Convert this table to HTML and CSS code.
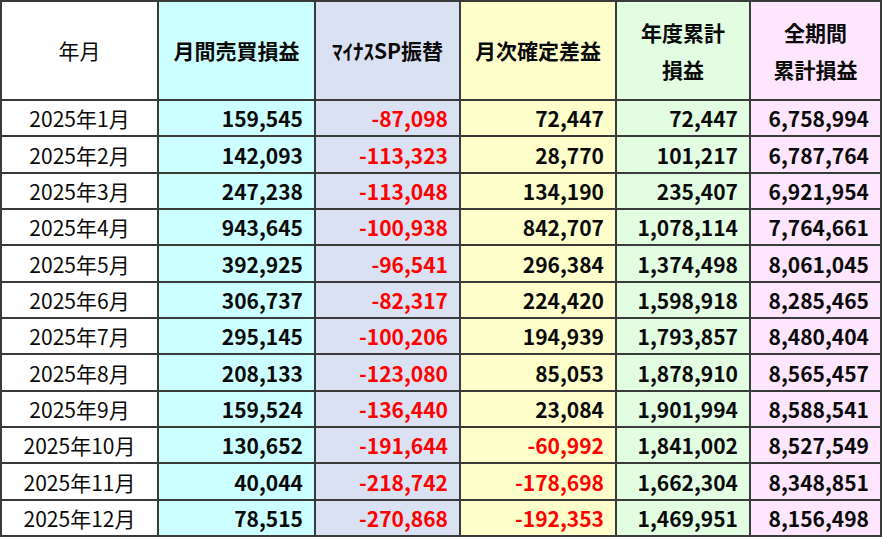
FILE: index.html
```html
<!DOCTYPE html>
<html lang="ja">
<head>
<meta charset="utf-8">
<link rel="stylesheet" href="styles.css">
</head>
<body>
<div class="sheet">
  <div class="cell head c1 normal">年月</div>
  <div class="cell head c2">月間売買損益</div>
  <div class="cell head c3">ﾏｲﾅｽSP振替</div>
  <div class="cell head c4">月次確定差益</div>
  <div class="cell head c5">年度累計<br>損益</div>
  <div class="cell head c6">全期間<br>累計損益</div>

  <div class="cell month c1">2025年1月</div><div class="cell num c2">159,545</div><div class="cell num c3 neg">-87,098</div><div class="cell num c4">72,447</div><div class="cell num c5">72,447</div><div class="cell num c6">6,758,994</div>
  <div class="cell month c1">2025年2月</div><div class="cell num c2">142,093</div><div class="cell num c3 neg">-113,323</div><div class="cell num c4">28,770</div><div class="cell num c5">101,217</div><div class="cell num c6">6,787,764</div>
  <div class="cell month c1">2025年3月</div><div class="cell num c2">247,238</div><div class="cell num c3 neg">-113,048</div><div class="cell num c4">134,190</div><div class="cell num c5">235,407</div><div class="cell num c6">6,921,954</div>
  <div class="cell month c1">2025年4月</div><div class="cell num c2">943,645</div><div class="cell num c3 neg">-100,938</div><div class="cell num c4">842,707</div><div class="cell num c5">1,078,114</div><div class="cell num c6">7,764,661</div>
  <div class="cell month c1">2025年5月</div><div class="cell num c2">392,925</div><div class="cell num c3 neg">-96,541</div><div class="cell num c4">296,384</div><div class="cell num c5">1,374,498</div><div class="cell num c6">8,061,045</div>
  <div class="cell month c1">2025年6月</div><div class="cell num c2">306,737</div><div class="cell num c3 neg">-82,317</div><div class="cell num c4">224,420</div><div class="cell num c5">1,598,918</div><div class="cell num c6">8,285,465</div>
  <div class="cell month c1">2025年7月</div><div class="cell num c2">295,145</div><div class="cell num c3 neg">-100,206</div><div class="cell num c4">194,939</div><div class="cell num c5">1,793,857</div><div class="cell num c6">8,480,404</div>
  <div class="cell month c1">2025年8月</div><div class="cell num c2">208,133</div><div class="cell num c3 neg">-123,080</div><div class="cell num c4">85,053</div><div class="cell num c5">1,878,910</div><div class="cell num c6">8,565,457</div>
  <div class="cell month c1">2025年9月</div><div class="cell num c2">159,524</div><div class="cell num c3 neg">-136,440</div><div class="cell num c4">23,084</div><div class="cell num c5">1,901,994</div><div class="cell num c6">8,588,541</div>
  <div class="cell month c1">2025年10月</div><div class="cell num c2">130,652</div><div class="cell num c3 neg">-191,644</div><div class="cell num c4 neg">-60,992</div><div class="cell num c5">1,841,002</div><div class="cell num c6">8,527,549</div>
  <div class="cell month c1">2025年11月</div><div class="cell num c2">40,044</div><div class="cell num c3 neg">-218,742</div><div class="cell num c4 neg">-178,698</div><div class="cell num c5">1,662,304</div><div class="cell num c6">8,348,851</div>
  <div class="cell month c1">2025年12月</div><div class="cell num c2">78,515</div><div class="cell num c3 neg">-270,868</div><div class="cell num c4 neg">-192,353</div><div class="cell num c5">1,469,951</div><div class="cell num c6">8,156,498</div>
</div>
</body>
</html>
```

FILE: styles.css
```css
html, body {
  margin: 0;
  padding: 0;
  background: #ffffff;
}

.sheet {
  display: grid;
  grid-template-columns: 157px 157px 145px 156px 134px 131px;
  grid-template-rows: 99px repeat(12, 36.35px);
  width: 880px;
  border-top: 2px solid #3a3a3a;
  border-left: 2px solid #3a3a3a;
  font-family: "Noto Sans CJK JP", "Noto Sans", sans-serif;
  font-size: 21px;
  color: #0a0a0a;
}

.cell {
  box-sizing: border-box;
  border-right: 2px solid #3a3a3a;
  border-bottom: 2px solid #3a3a3a;
  display: flex;
  align-items: center;
  white-space: nowrap;
}

.head {
  justify-content: center;
  text-align: center;
  font-weight: 700;
  line-height: 37px;
}

.head.normal {
  font-weight: 400;
}

.month {
  justify-content: center;
  font-weight: 400;
}

.num {
  justify-content: flex-end;
  padding-right: 11px;
  font-weight: 700;
}

.neg {
  color: #ff0000;
}

.c1 { background: #ffffff; }
.c2 { background: #ccffff; }
.c3 { background: #dae1f3; }
.c4 { background: #ffffcc; }
.c5 { background: #e2fde2; }
.c6 { background: #ffe6ff; }
```
